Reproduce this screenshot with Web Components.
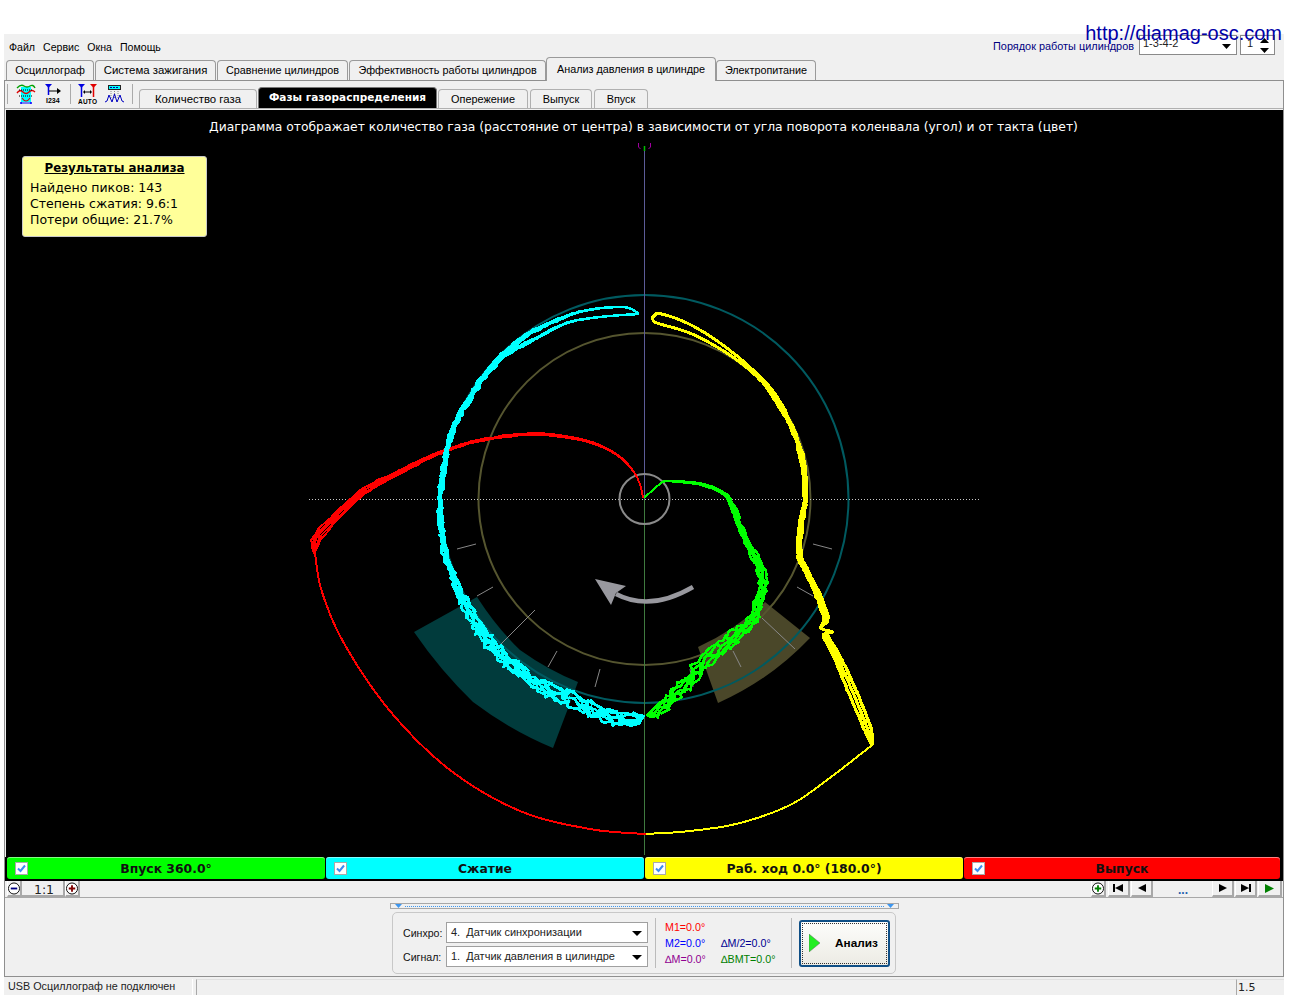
<!DOCTYPE html>
<html lang="ru">
<head>
<meta charset="utf-8">
<title>Осциллограф</title>
<style>
  html, body { margin: 0; background: #fff; }
  body { height: 1000px; overflow: hidden; font: 11px "Liberation Sans", Arial, sans-serif; color: #000; }
</style>
</head>
<body>
<app-window>
  <menu-bar>
    <span>Файл</span><span>Сервис</span><span>Окна</span><span>Помощь</span>
    <firing-order slot="right"></firing-order>
  </menu-bar>
  <tab-strip>
    <tab-item style="width:88px">Осциллограф</tab-item>
    <tab-item style="width:121px;font-size:11.4px">Система зажигания</tab-item>
    <tab-item style="width:131px">Сравнение цилиндров</tab-item>
    <tab-item style="width:197px">Эффективность работы цилиндров</tab-item>
    <tab-item active style="width:170px">Анализ давления в цилиндре</tab-item>
    <tab-item style="width:100px">Электропитание</tab-item>
  </tab-strip>
  <work-space>
    <tool-bar>
      <sub-tab style="width:118px;font-size:11.4px">Количество газа</sub-tab>
      <sub-tab dark style="width:179px">Фазы газораспределения</sub-tab>
      <sub-tab style="width:90px">Опережение</sub-tab>
      <sub-tab style="width:62px;margin-left:1px">Выпуск</sub-tab>
      <sub-tab style="width:54px;margin-left:1px">Впуск</sub-tab>
    </tool-bar>
    <chart-view>
      <span slot="title">Диаграмма отображает количество газа (расстояние от центра) в зависимости от угла поворота коленвала (угол) и от такта (цвет)</span>
      <result-note>
        <span slot="head">Результаты анализа</span>
        <div>Найдено пиков: 143</div>
        <div>Степень сжатия: 9.6:1</div>
        <div>Потери общие: 21.7%</div>
      </result-note>
    </chart-view>
    <phase-bars>
      <phase-bar style="--c:#00ff00">Впуск 360.0°</phase-bar>
      <phase-bar style="--c:#00ffff">Сжатие</phase-bar>
      <phase-bar style="--c:#ffff00">Раб. ход 0.0° (180.0°)</phase-bar>
      <phase-bar style="--c:#ff0000">Выпуск</phase-bar>
    </phase-bars>
    <nav-row></nav-row>
    <analysis-panel></analysis-panel>
  </work-space>
  <status-bar></status-bar>
</app-window>

<template id="app-window-tpl">
  <style>
    :host { display: block; position: relative; width: 1280px; margin: 34px 0 0 4px; background: #f0f0f0; }
    .site { position: absolute; right: 2px; top: -13px; font: 20px/24px "Liberation Sans", sans-serif; color: #0000a8; white-space: nowrap; }
  </style>
  <slot></slot>
  <span class="site">http://diamag-osc.com</span>
</template>

<template id="menu-bar-tpl">
  <style>
    :host { display: flex; align-items: flex-start; height: 23px; padding: 0 9px 0 5px; font-size: 10.6px; }
    .items { display: flex; gap: 8px; padding-top: 7px; }
    .right { margin-left: auto; padding-top: 1px; }
  </style>
  <div class="items"><slot></slot></div>
  <div class="right"><slot name="right"></slot></div>
</template>

<template id="firing-order-tpl">
  <style>
    :host { display: flex; align-items: center; gap: 5px; color: #000080; font-size: 10.9px; }
    .label { padding-top: 2px; }
    .sel, .spin { box-sizing: border-box; height: 20px; border: 1px solid #8a8a8a; background: #fff; color: #222; display: flex; position: relative; padding: 0 3px; line-height: 15px; font-size: 11px; }
    .sel { width: 98px; }
    .spin { width: 35px; margin-left: -2px; padding-left: 6px; }
    svg { position: absolute; }
    .sel svg { right: 5px; top: 8px; }
    .spin svg { right: 5px; top: 2px; }
  </style>
  <span class="label">Порядок работы цилиндров</span>
  <div class="sel">1-3-4-2<svg width="9" height="5"><path d="M0 0h9L4.500 5z"/></svg></div>
  <div class="spin">1<svg width="9" height="15"><path d="M0 5L4.500 0 9 5zM0 10h9L4.500 15z"/></svg></div>
</template>

<template id="tab-strip-tpl">
  <style>
    :host { display: flex; align-items: flex-end; gap: 1px; height: 23px; padding-left: 2px; position: relative; z-index: 1; }
  </style>
  <slot></slot>
</template>

<template id="tab-item-tpl">
  <style>
    :host { display: flex; align-items: center; justify-content: center; box-sizing: border-box; height: 20px; border: 1px solid #9a9a9a; border-bottom: 0; border-radius: 4px 4px 0 0; background: #f0f0f0; font-size: 10.8px; white-space: nowrap; position: relative; padding-bottom: 1px; }
    :host([active]) { height: 24px; margin: 0 -1px -1px -1px; z-index: 2; padding: 0 0 2px; background: #f0f0f0; }
  </style>
  <slot></slot>
</template>

<template id="work-space-tpl">
  <style>
    :host { display: block; box-sizing: border-box; border: 1px solid #8f8f8f; border-width: 1px 1px 0 1px; }
  </style>
  <slot></slot>
</template>

<template id="tool-bar-tpl">
  <style>
    :host { display: flex; align-items: flex-end; height: 27px; border-bottom: 1px solid #b0b0b0; }
    .btns { display: flex; align-items: center; align-self: flex-start; width: 134px; height: 26px; box-sizing: border-box; flex: none; }
    .sep { width: 1px; height: 20px; background: #aaa; flex: none; }
    svg { display: block; flex: none; }
    .tabs { display: flex; align-items: flex-end; gap: 1px; }
  </style>
  <div class="btns">
    <svg width="2" height="1"></svg><span class="sep"></span>
    <svg width="8" height="1"></svg>
    <svg width="20" height="20" viewBox="0 0 20 20">
      <rect x="5" y="3" width="10" height="15" fill="#00ffff"/>
      <path d="M1 4Q5 0 8 2T14 2 19 4" fill="none" stroke="#00a000" stroke-width="1.400"/>
      <path d="M1 9Q4 5 7 8t6 0 6 0" fill="none" stroke="#e00000" stroke-width="1.400"/>
      <path d="M3 6h14M3 12h14" stroke="#000" stroke-width="1" stroke-dasharray="1 1"/>
      <path d="M5 18v2M15 18v2" stroke="#00f" stroke-width="1.500"/><path d="M5 19h10" stroke="#00f"/>
      <path d="M6 14Q10 20 14 14" fill="none" stroke="#e00000" stroke-width="1.200"/>
    </svg>
    <svg width="8" height="1"></svg>
    <svg width="20" height="20" viewBox="0 0 20 20">
      <path d="M1 0h7L4.500 4z" fill="#0000e0"/><path d="M4.500 3v8" stroke="#0000e0" stroke-width="1.500"/>
      <path d="M5 7h10" stroke="#000"/><path d="M13 4l4 3-4 3z"/>
      <text x="2" y="19" font-family="Liberation Sans" font-size="7" font-weight="700">I234</text>
    </svg>
    <svg width="6" height="1"></svg><span class="sep"></span>
    <svg width="7" height="1"></svg>
    <svg width="20" height="20" viewBox="0 0 20 20">
      <path d="M0 0h7L3.500 4z" fill="#0000e0"/><path d="M3.500 3v10" stroke="#0000e0" stroke-width="1.500"/>
      <path d="M12 0h7l-3.500 4z" fill="#e00000"/><path d="M15.500 3v10" stroke="#e00000" stroke-width="1.500"/>
      <path d="M6 8h7" stroke="#000"/><path d="M7 6L5 8l2 2zM12 6l2 2-2 2z"/>
      <text x="0" y="20" font-family="Liberation Sans" font-size="6.500" font-weight="700" textLength="19">AUTO</text>
    </svg>
    <svg width="7" height="1"></svg>
    <svg width="20" height="20" viewBox="0 0 20 20">
      <rect x="3.500" y="1.500" width="12" height="4" fill="#00ffff" stroke="#222"/>
      <path d="M5 3.500h9" stroke="#0000a0" stroke-dasharray="2 1"/>
      <path d="M6 7v8M9.500 7v8M13 7v8" stroke="#888" stroke-dasharray="1 1"/>
      <path d="M0 18L2 17 4 11 7 18 9.500 10 12 18 15 11 17 17 19 18" fill="none" stroke="#0000c0" stroke-width="1"/>
    </svg>
    <svg width="7" height="1"></svg><span class="sep"></span>
    <svg width="6" height="1"></svg>
  </div>
  <div class="tabs"><slot></slot></div>
</template>

<template id="sub-tab-tpl">
  <style>
    :host { display: flex; align-items: center; justify-content: center; box-sizing: border-box; height: 19px; border: 1px solid #b0b0b0; border-bottom: 0; border-radius: 4px 4px 0 0; font-size: 10.9px; white-space: nowrap; padding-bottom: 1px; }
    :host([dark]) { height: 21px; background: #000; color: #fff; border-color: #777; font: 700 10.5px "DejaVu Sans", sans-serif; padding: 0 0 3px; }
  </style>
  <slot></slot>
</template>

<template id="chart-view-tpl">
  <style>
    :host { display: block; position: relative; height: 747px; margin: 1px 0 0 1px; background: #000; color: #fff; overflow: hidden; }
    svg { position: absolute; left: 0; top: 0; }
    .title { position: relative; display: block; text-align: center; padding: 10px 2px 0 0; font: 12.33px/15px "DejaVu Sans", sans-serif; white-space: nowrap; }
  </style>
  <svg id="plot" width="1277" height="747" viewBox="6 110 1277 747"></svg>
  <div class="title"><slot name="title"></slot></div>
  <slot></slot>
</template>

<template id="result-note-tpl">
  <style>
    :host { position: absolute; left: 16px; top: 46px; box-sizing: border-box; width: 185px; height: 81px; background: #ffff99; border: 1px solid #c8c8c8; border-radius: 3px; color: #000; padding: 4px 7px; font: 12.5px/16px "DejaVu Sans", sans-serif; }
    .head { text-align: center; font-weight: 700; text-decoration: underline; font-size: 11.85px; margin-bottom: 4px; line-height: 15px; }
  </style>
  <div class="head"><slot name="head"></slot></div>
  <slot></slot>
</template>

<template id="phase-bars-tpl">
  <style>
    :host { display: grid; grid-template-columns: 318px 318px 318px 316px; gap: 1px; height: 24px; box-sizing: border-box; background: #000; padding: 0 2px 2px 2px; margin-left: 0; }
  </style>
  <slot></slot>
</template>

<template id="phase-bar-tpl">
  <style>
    :host { display: flex; align-items: center; justify-content: center; position: relative; background: var(--c); border-radius: 3px; box-shadow: inset 0 1px 0 rgba(255,255,255,.5); font: 700 12.4px "DejaVu Sans", sans-serif; color: #111; }
    svg { position: absolute; left: 8px; top: 5px; }
  </style>
  <svg width="13" height="13" viewBox="0 0 13 13"><rect x=".5" y=".5" width="12" height="12" fill="#fff" stroke="#aaa"/><path d="M3 6.500l2.500 2.500L10 3.500" fill="none" stroke="#3c8cf0" stroke-width="2"/></svg>
  <slot></slot>
</template>

<template id="nav-row-tpl">
  <style>
    :host { display: flex; align-items: stretch; height: 16px; border-bottom: 1px solid #a8a8a8; box-sizing: content-box; }
    .b { box-sizing: border-box; width: 22px; display: flex; align-items: center; justify-content: center; background: #f0f0f0; border-right: 2px solid #a8a8a8; border-bottom: 2px solid #a8a8a8; border-left: 1px solid #fff; margin-right: 1px; flex: none; }
    .c { width: 15px; margin-right: 0; }
    .scale { width: 43px; padding-left: 3px; text-align: center; font: 12.500px/17px "DejaVu Sans", sans-serif; color: #222; box-sizing: border-box; border-right: 2px solid #a8a8a8; border-bottom: 2px solid #a8a8a8; }
    .dots { width: 58px; text-align: center; font: 700 12px/18px "Liberation Sans", sans-serif; color: #1f5fae; flex: none; }
    .fill { flex: 1; }
    .pad { width: 2px; flex: none; }
  </style>
  <span class="pad"></span>
  <span class="b c"><svg width="13" height="13" viewBox="0 0 13 13"><circle cx="6.500" cy="6.500" r="6" fill="#fff" stroke="#000"/><path d="M3 6.500h7" stroke="#000080" stroke-width="2"/></svg></span>
  <span class="scale">1:1</span>
  <span class="b c"><svg width="13" height="13" viewBox="0 0 13 13"><circle cx="6.500" cy="6.500" r="6" fill="#fff" stroke="#000"/><path d="M3 6.500h7M6.500 3v7" stroke="#800000" stroke-width="2"/></svg></span>
  <span class="fill"></span>
  <span class="b c" style="margin-right:2px"><svg width="13" height="13" viewBox="0 0 13 13"><circle cx="6.500" cy="6.500" r="6" fill="#fff" stroke="#000"/><path d="M3 6.500h7M6.500 3v7" stroke="#008000" stroke-width="2"/></svg></span>
  <span class="b"><svg width="11" height="8"><path d="M0 0h2v8H0zM2 4l8-4v8z"/></svg></span>
  <span class="b"><svg width="8" height="8"><path d="M0 4l8-4v8z"/></svg></span>
  <span class="dots">...</span>
  <span class="b"><svg width="8" height="8"><path d="M8 4L0 0v8z"/></svg></span>
  <span class="b"><svg width="11" height="8"><path d="M9 0h2v8H9zM9 4L1 0v8z"/></svg></span>
  <span class="b" style="width:24px;margin-right:0"><svg width="9" height="9"><path d="M9 4.500L0 0v9z" fill="#008000"/></svg></span>
  <span class="pad" style="width:1px"></span>
</template>

<template id="analysis-panel-tpl">
  <style>
    :host { display: flex; flex-direction: column; align-items: center; height: 79px; box-sizing: border-box; padding-top: 5px; border-bottom: 1px solid #8f8f8f; }
    .strip { box-sizing: border-box; width: 509px; height: 6px; border: 1px solid #a8a8a8; display: flex; align-items: center; gap: 3px; padding: 0 4px; }
    .strip i { flex: 1; border-top: 1px dotted #3c96f0; }
    .strip svg { display: block; }
    .group { box-sizing: border-box; width: 504px; height: 62px; margin-top: 3px; border: 1px solid #c8c8c8; border-radius: 5px; display: flex; align-items: center; font-size: 11px; }
    .rows { display: grid; grid-template-columns: 43px 202px; row-gap: 3px; align-items: center; padding: 3px 0 0 10px; color: #111; }
    .lab { font-size: 10.6px; }
    .sel { box-sizing: border-box; height: 21px; border: 1px solid #a0a0a0; background: #fff; position: relative; line-height: 19px; padding-left: 4px; white-space: pre; color: #222; }
    .sel svg { position: absolute; right: 5px; top: 8px; }
    .sep { width: 1px; height: 50px; background: #bbb; flex: none; }
    .vals { display: grid; grid-template-columns: 56px 70px; row-gap: 2px; padding-left: 9px; font-size: 10.7px; line-height: 14px; width: 135px; box-sizing: border-box; white-space: nowrap; }
    .run { box-sizing: border-box; width: 91px; height: 47px; margin-left: 7px; border: 2px solid #0f4f86; border-radius: 3px; background: linear-gradient(#fdfdfb, #ecebe4); outline: 1px dotted #333; outline-offset: -4px; display: flex; align-items: center; font: 700 11.8px "Liberation Sans", sans-serif; padding-left: 8px; gap: 15px; }
  </style>
  <div class="strip">
    <svg width="7" height="4"><path d="M0 0h7L3.500 4z" fill="#3c96f0"/></svg><i></i>
    <svg width="7" height="4"><path d="M0 0h7L3.500 4z" fill="#3c96f0"/></svg>
  </div>
  <div class="group">
    <div class="rows">
      <span class="lab">Синхро:</span>
      <div class="sel">4.  Датчик синхронизации<svg width="10" height="5"><path d="M0 0h10L5 5z"/></svg></div>
      <span class="lab">Сигнал:</span>
      <div class="sel">1.  Датчик давления в цилиндре<svg width="10" height="5"><path d="M0 0h10L5 5z"/></svg></div>
    </div>
    <span class="sep" style="margin-left:7px"></span>
    <div class="vals">
      <span style="color:#f00;grid-column:1/3">M1=0.0°</span>
      <span style="color:#00f">M2=0.0°</span><span style="color:#000090">∆M/2=0.0°</span>
      <span style="color:#900090">∆M=0.0°</span><span style="color:#008000">∆BMT=0.0°</span>
    </div>
    <span class="sep"></span>
    <div class="run"><svg width="11" height="18"><path d="M0 0l11 9L0 18z" fill="#22ee22" stroke="#666" stroke-width=".5"/></svg>Анализ</div>
  </div>
</template>

<template id="status-bar-tpl">
  <style>
    :host { display: flex; height: 16px; margin-top: 2px; font-size: 10.8px; line-height: 15px; color: #222; }
    .a { width: 189px; padding-left: 4px; box-sizing: border-box; border-right: 1px solid #fff; }
    .b { flex: 1; border-left: 1px solid #a8a8a8; border-top: 1px solid #e0e0e0; margin-left: 3px; }
    .c { width: 48px; box-sizing: border-box; border-left: 1px solid #a8a8a8; padding-left: 1px; font-family: "DejaVu Sans", sans-serif; font-size: 11px; border-top: 1px solid #e0e0e0; }
  </style>
  <div class="a">USB Осциллограф не подключен</div>
  <div class="b"></div>
  <div class="c">1.5</div>
</template>

<script>
// every element here is just a shadow root cloned from its template
function plainElement(name, setup) {
  const tpl = document.getElementById(name + '-tpl')
  customElements.define(name, class extends HTMLElement {
    constructor() {
      super()
      const shadow = this.attachShadow({mode: 'open'})
      shadow.appendChild(tpl.content.cloneNode(true))
      if (setup) setup(shadow)
    }
  })
}

// small seeded random so the photo is the same each run
let seed = 12345
function rnd() {
  seed = (seed * 16807) % 2147483647
  return seed / 2147483647 * 2 - 1
}

const el = (tag, attrs) => {
  const e = document.createElementNS('http://www.w3.org/2000/svg', tag)
  for (const k in attrs) e.setAttribute(k, attrs[k])
  return e
}

// catmull-rom through [x, y, jitter, spread] points, returns noisy path data
function strand(pts, offset, step) {
  const out = []
  const cr = (a, b, c, d, t) => 0.5 * (2 * b + (c - a) * t + (2 * a - 5 * b + 4 * c - d) * t * t + (3 * b - a - 3 * c + d) * t * t * t)
  for (let i = 0; i < pts.length - 1; i++) {
    const p0 = pts[i - 1] || pts[i], p1 = pts[i], p2 = pts[i + 1], p3 = pts[i + 2] || p2
    const [x1, y1, a1 = 0, s1 = 0] = p1
    const [x2, y2, a2 = 0, s2 = 0] = p2
    const len = Math.hypot(x2 - x1, y2 - y1) || 1
    const n = Math.max(1, Math.round(len / step))
    const nx = -(y2 - y1) / len, ny = (x2 - x1) / len
    for (let j = 0; j < n; j++) {
      const t = j / n
      const a = a1 + (a2 - a1) * t, s = (s1 + (s2 - s1) * t) * offset
      out.push([
        cr(p0[0], x1, x2, p3[0], t) + nx * s + rnd() * a,
        cr(p0[1], y1, y2, p3[1], t) + ny * s + rnd() * a
      ])
    }
  }
  const last = pts[pts.length - 1]
  out.push([last[0], last[1]])
  return 'M' + out.map(p => p[0].toFixed(1) + ' ' + p[1].toFixed(1)).join('L')
}

function trace(svg, pts, color, width, copies, step) {
  for (let c = 0; c < copies; c++) {
    const offset = copies > 1 ? c / (copies - 1) * 2 - 1 : 0
    svg.appendChild(el('path', {
      d: strand(pts, offset, step || 5), fill: 'none', stroke: color, 'stroke-width': width,
      'stroke-linejoin': 'round', 'stroke-linecap': 'round', 'shape-rendering': 'crispEdges'
    }))
  }
}

function drawPlot(svg) {
  const cx = 644.5, cy = 499
  const line = (x1, y1, x2, y2, stroke, extra) => svg.appendChild(el('line', Object.assign({x1, y1, x2, y2, stroke}, extra)))
  const circle = (r, stroke, w) => svg.appendChild(el('circle', {cx, cy, r, fill: 'none', stroke, 'stroke-width': w}))

  // valve sectors
  svg.appendChild(el('path', {fill: '#013b3c', d: 'M414 632L477 597Q497 628 520 650Q548 670 578 682L553 748Q510 730 473 702Q440 670 414 632z'}))
  svg.appendChild(el('path', {fill: '#4a4729', d: 'M698 647Q735 630 765 602L810 638Q770 680 718 703z'}))

  circle(204, '#005a60', 2)
  circle(166, '#55552f', 2)

  // axes
  line(309, 499.5, 979, 499.5, '#c8c8c8', {'stroke-dasharray': '1 2'})
  line(644.5, 151, 644.5, 499, '#5c5c98')
  line(644.5, 499, 644.5, 855, '#3f7a3f')
  svg.appendChild(el('path', {d: 'M638.500 143v4l2 2M650.500 143v4l-2 2', fill: 'none', stroke: '#a000a0', 'stroke-width': 1}))
  line(644.5, 146, 644.5, 151, '#00c000', {'stroke-width': 1.500})

  // tick marks on the valve timing
  const ticks = [[457,549,476,544],[813,544,832,549],[477,596,493,587],[495,650,535,610],[548,667,557,651],[595,687,600,669],[690,669,693,687],[733,651,741,667],[762,618,795,649],[797,587,813,596]]
  for (const t of ticks) line(t[0], t[1], t[2], t[3], '#888', {'stroke-width': 1})

  // rotation arrow
  svg.appendChild(el('path', {d: 'M693 587Q650 612 616 594', fill: 'none', stroke: '#98989e', 'stroke-width': 4.500}))
  svg.appendChild(el('path', {d: 'M595 579L626 586 616 593 611 605z', fill: '#98989e'}))

  circle(25, '#8a8a8a', 2)

  // outer thin arcs
  trace(svg, [[872,745],[862,753],[827,780],[790,805],[740,823],[690,831],[645,834]], '#ffff00', 2, 1, 5)
  trace(svg, [[645,834],[590,829],[520,811],[450,770],[390,711],[345,645],[322,592],[315,553]], '#ff0000', 2, 1, 5)

  // exhaust: red, thickening to the left
  trace(svg, [[643,497],[637,477],[620,457,0,.3],[593,443,0,.6],[560,436,0,.8],[533,434,.3,.8],[507,436,.4,.8],[473,442,.5,.8],[447,450,.5,1],[430,457,.5,1.200],[400,472,.6,1.800],[363,492,.8,2.800],[330,523,.8,3.500],[316,540,1,4],[314,553,.5,1]], '#ff0000', 2, 5, 6)

  // compression: cyan, two branches from the tip then noisy towards the bottom
  const cyanTail = [[500,358,1.200,1.500],[477,387,1.200,1.500],[457,420,1.200,1.500],[447,450,1.200,1.500],[442,480,1.500,1.500],[440,507,1.500,1.500],[443,543,1.800,1.500],[447,560,2,1.800],[460,593,2.500,2.500],[480,630,3,3.500],[500,653,3.500,3.500],[520,670,3.500,4],[543,687,4,4.500],[573,700,3.500,4.500],[600,713,4,4.500],[627,720,4,4.500],[643,717,3,3]]
  trace(svg, [[638,313],[623,307],[583,311,.3],[553,322,.5,.8],[527,335,.8,1.200]].concat(cyanTail), '#00ffff', 2.500, 3, 4)
  trace(svg, [[638,314],[600,317],[567,323,.3],[533,340,.5,.8]].concat(cyanTail), '#00ffff', 2.500, 3, 4)

  // power stroke: yellow
  const yellowTail = [[793,430,.8,1],[803,463,1,1.500],[805,500,.8,1],[800,530,1,1.500],[800,557,1,1.500],[810,578,1,1.500],[820,600,1,2],[826,620,1,2],[820,628],[833,632],[825,634,.5,2],[837,657,.5,3],[853,693,.5,4],[868,730,.5,3.500],[872,745]]
  trace(svg, [[652,318],[657,313],[687,323],[720,343],[753,370],[777,397,.4]].concat(yellowTail), '#ffff00', 3, 3, 5)
  trace(svg, [[652,318],[654,322],[687,332],[710,343],[737,360],[763,383,.4],[781,410,.4]].concat(yellowTail), '#ffff00', 3, 3, 5)

  // intake: green
  trace(svg, [[645,497],[662,482]], '#00ff00', 2, 1, 30)
  trace(svg, [[662,482],[670,481],[700,484,.3,.6],[723,493,.5,1],[733,507,1,1.800],[740,527,1.200,2],[753,553,1.200,3],[761,570,1.500,3.500],[763,590,1.500,3],[758,603,2,3.500],[753,620,2.500,4.500],[730,640,3,5.500],[707,660,3,5.500],[690,680,3.500,5],[673,697,3.500,5],[650,717,2.500,3]], '#00ff00', 2.500, 5, 4)
}

for (const name of ['app-window', 'menu-bar', 'firing-order', 'tab-strip', 'tab-item', 'work-space', 'tool-bar', 'sub-tab', 'result-note', 'phase-bars', 'phase-bar', 'nav-row', 'analysis-panel', 'status-bar']) {
  plainElement(name)
}
plainElement('chart-view', shadow => drawPlot(shadow.getElementById('plot')))
</script>
</body>
</html>
